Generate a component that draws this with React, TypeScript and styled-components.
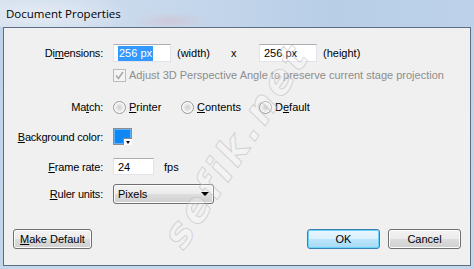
import React from 'react';
import styled, { createGlobalStyle } from 'styled-components';

const GlobalStyle = createGlobalStyle`
  html, body {
    margin: 0;
    padding: 0;
    background: #c3d5ea;
  }
  body {
    font-family: "Liberation Sans", Arial, sans-serif;
    font-size: 11px;
    color: #000;
  }
`;

const Window = styled.div`
  position: relative;
  width: 474px;
  height: 269px;
  display: flex;
  flex-direction: column;
  background: linear-gradient(to bottom, #bfd2e9, #c4d6ea);
  overflow: hidden;
`;

const TitleBar = styled.div`
  height: 27px;
  flex: none;
  display: flex;
  align-items: center;
  padding-left: 6px;
  background:
    radial-gradient(ellipse 40px 9px at 170px 21px, rgba(214, 180, 188, 0.4), transparent),
    radial-gradient(ellipse 90px 22px at 40px 14px, rgba(230, 236, 244, 0.9), transparent),
    linear-gradient(to right, #d3dfee 0%, #c7d8ec 35%, #b8cee7 70%, #bdd2ea 100%);
`;

const Title = styled.span`
  font-family: "Open Sans", "Noto Sans", sans-serif;
  font-size: 11.5px;
  color: #000;
  padding-bottom: 1px;
`;

const Frame = styled.div`
  flex: 1;
  display: flex;
  padding: 0 3px 3px 3px;
`;

const Content = styled.div`
  flex: 1;
  display: flex;
  flex-direction: column;
  background: #f0f0f0;
  border: 1px solid #5d6e82;
  padding: 16px 9px 16px 0;
`;

const Row = styled.div<{ $mt?: number; $h: number }>`
  display: flex;
  align-items: center;
  height: ${p => p.$h}px;
  margin-top: ${p => p.$mt ?? 0}px;
`;

const Label = styled.div`
  width: 99px;
  flex: none;
  text-align: right;
  padding-right: 10px;
  box-sizing: content-box;
  white-space: nowrap;
  letter-spacing: -0.2px;
`;

const Key = styled.u`
  text-decoration: underline;
  text-underline-offset: 1px;
`;

const TextBox = styled.div<{ $w: number; $h?: number }>`
  width: ${p => p.$w}px;
  height: ${p => p.$h ?? 18}px;
  box-sizing: border-box;
  background: #fff;
  border: 1px solid #e2e3ea;
  border-top-color: #abadb3;
  display: flex;
  align-items: center;
  padding-left: 4px;
  flex: none;
`;

const Selected = styled.span`
  background: #3399ff;
  color: #fff;
  padding: 1px 1px 2px;
`;

const Caption = styled.span<{ $w?: number; $ml?: number }>`
  display: inline-block;
  width: ${p => (p.$w ? `${p.$w}px` : 'auto')};
  margin-left: ${p => p.$ml ?? 0}px;
  flex: none;
  white-space: nowrap;
`;

const CheckBox = styled.span`
  width: 13px;
  height: 13px;
  box-sizing: border-box;
  border: 1px solid #bcbcbc;
  background: #f4f4f4;
  display: inline-flex;
  align-items: center;
  justify-content: center;
  flex: none;
`;

const Disabled = styled.span`
  color: #8d8d8d;
  margin-left: 3px;
  white-space: nowrap;
`;

const Option = styled.label<{ $w?: number }>`
  display: flex;
  align-items: center;
  width: ${p => (p.$w ? `${p.$w}px` : 'auto')};
  flex: none;
  gap: 3px;
`;

const Radio = styled.span`
  width: 13px;
  height: 13px;
  box-sizing: border-box;
  border-radius: 50%;
  border: 1px solid #9a9a9a;
  background: radial-gradient(circle at 50% 50%, #cfcfcf 0, #e6e6e6 3px, #f4f4f4 5px);
  box-shadow: inset 0 0 0 1px #fafafa;
  flex: none;
`;

const Swatch = styled.div`
  position: relative;
  width: 19px;
  height: 17px;
  box-sizing: border-box;
  border: 1px solid #8c8c8c;
  background: #0f88f6;
  box-shadow: inset 0 0 0 1px #5fb0f8;
`;

const SwatchArrow = styled.span`
  position: absolute;
  right: -1px;
  bottom: -1px;
  width: 8px;
  height: 6px;
  background: #fff;
  border-left: 1px solid #8c8c8c;
  border-top: 1px solid #8c8c8c;
  display: flex;
  align-items: center;
  justify-content: center;
  &::after {
    content: '';
    border-left: 2.5px solid transparent;
    border-right: 2.5px solid transparent;
    border-top: 3px solid #000;
  }
`;

const Select = styled.div`
  width: 101px;
  height: 20px;
  box-sizing: border-box;
  border: 1px solid #707070;
  border-radius: 3px;
  background: linear-gradient(to bottom, #f2f2f2 0%, #ebebeb 50%, #dddddd 50%, #cfcfcf 100%);
  box-shadow: inset 0 0 0 1px #fcfcfc;
  display: flex;
  align-items: center;
  justify-content: space-between;
  padding: 0 4px;
`;

const Caret = styled.span`
  border-left: 4px solid transparent;
  border-right: 4px solid transparent;
  border-top: 4px solid #000;
`;

const Footer = styled.div`
  margin-top: auto;
  display: flex;
  align-items: center;
  padding-left: 9px;
  gap: 8px;
`;

const Button = styled.button<{ $primary?: boolean; $w: number }>`
  width: ${p => p.$w}px;
  height: 20px;
  box-sizing: border-box;
  font-family: "Liberation Sans", Arial, sans-serif;
  font-size: 11px;
  color: #000;
  padding: 0;
  border-radius: 3px;
  border: 1px solid ${p => (p.$primary ? '#3c7fb1' : '#707070')};
  background: ${p =>
    p.$primary
      ? 'linear-gradient(to bottom, #eaf6fd 0%, #d9f0fc 50%, #bee6fd 50%, #a7d9f5 100%)'
      : 'linear-gradient(to bottom, #f2f2f2 0%, #ebebeb 50%, #dddddd 50%, #cfcfcf 100%)'};
  box-shadow: inset 0 0 0 1px ${p => (p.$primary ? '#6ad3f8' : '#fcfcfc')};
`;

const Spacer = styled.div`
  flex: 1;
`;

const Watermark = styled.div`
  position: absolute;
  left: 236px;
  top: 145px;
  transform: translate(-50%, -50%) rotate(-57deg);
  font-family: "DejaVu Sans", sans-serif;
  font-weight: bold;
  font-style: italic;
  font-size: 40px;
  letter-spacing: 4px;
  color: rgba(255, 255, 255, 0.25);
  -webkit-text-stroke: 1px rgba(185, 185, 185, 0.55);
  pointer-events: none;
  white-space: nowrap;
`;

const Check = () => (
  <svg width="9" height="9" viewBox="0 0 9 9">
    <path d="M1 4.5 L3.5 7.5 L8 1" fill="none" stroke="#a9a9a9" strokeWidth="1.6" />
  </svg>
);

const App: React.FC = () => {
  return (
    <Window>
      <GlobalStyle />
      <TitleBar>
        <Title>Document Properties</Title>
      </TitleBar>
      <Frame>
        <Content>
          <Row $h={18}>
            <Label>Di<Key>m</Key>ensions:</Label>
            <TextBox $w={58}>
              <Selected>256 px</Selected>
            </TextBox>
            <Caption $w={54} $ml={6}>(width)</Caption>
            <Caption $w={28}>x</Caption>
            <TextBox $w={58}>256 px</TextBox>
            <Caption $ml={6}>(height)</Caption>
          </Row>
          <Row $h={16} $mt={5}>
            <Label />
            <CheckBox>
              <Check />
            </CheckBox>
            <Disabled>Adjust 3D Perspective Angle to preserve current stage projection</Disabled>
          </Row>
          <Row $h={16} $mt={16}>
            <Label>Ma<Key>t</Key>ch:</Label>
            <Option $w={68}>
              <Radio />
              <span><Key>P</Key>rinter</span>
            </Option>
            <Option $w={78}>
              <Radio />
              <span><Key>C</Key>ontents</span>
            </Option>
            <Option>
              <Radio />
              <span>D<Key>e</Key>fault</span>
            </Option>
          </Row>
          <Row $h={17} $mt={13}>
            <Label><Key>B</Key>ackground color:</Label>
            <Swatch>
              <SwatchArrow />
            </Swatch>
          </Row>
          <Row $h={17} $mt={13}>
            <Label><Key>F</Key>rame rate:</Label>
            <TextBox $w={41} $h={17}>24</TextBox>
            <Caption $ml={10}>fps</Caption>
          </Row>
          <Row $h={20} $mt={9}>
            <Label><Key>R</Key>uler units:</Label>
            <Select>
              <span>Pixels</span>
              <Caret />
            </Select>
          </Row>
          <Footer>
            <Button $w={79}><Key>M</Key>ake Default</Button>
            <Spacer />
            <Button $w={73} $primary>OK</Button>
            <Button $w={73}>Cancel</Button>
          </Footer>
        </Content>
      </Frame>
      <Watermark>sefik.net</Watermark>
    </Window>
  );
};

export default App;
